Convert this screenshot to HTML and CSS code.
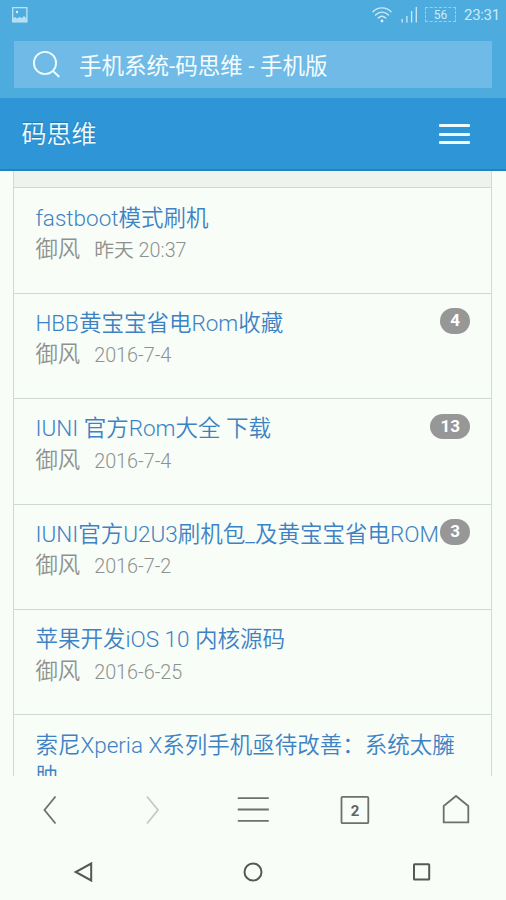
FILE: index.html
```html
<!DOCTYPE html>
<html lang="zh-CN">
<head>
<meta charset="utf-8">
<title>手机系统-码思维</title>
<link rel="stylesheet" href="styles.css">
</head>
<body>
<div class="screen">
  <div class="top">
    <div class="status">
      <svg class="photo" width="16" height="16" viewBox="0 0 16 16"><rect x=".7" y=".7" width="14.2" height="14.2" fill="none" stroke="#c3e9f8" stroke-width="1.2"/><path d="M1 11l2-1 2 1.500 2.500-1.500 2.500 1 2-2 3 2.500V15H1z" fill="#b4dff4"/><circle cx="5" cy="5" r="1.200" fill="#d5f1fb"/></svg>
      <svg class="wifi" width="20" height="16" viewBox="0 0 20 16" fill="none" stroke="#c9ebf8" stroke-width="1.400" stroke-linecap="round"><path d="M1 4.800C6-.4 14-.4 19 4.800M3.500 8C7.400 4.200 12.600 4.200 16.500 8M6.200 11C8.600 8.800 11.400 8.800 13.800 11"/><circle cx="10" cy="14" r="1.400" fill="#d5f1fb" stroke="none"/></svg>
      <svg class="signal" width="17" height="17" viewBox="0 0 17 17" stroke="#c9ebf8" stroke-width="1.300"><path d="M1.200 12v3.500M5.900 9v6.500M10.600 4v11.500M15.300 0v15.500"/></svg>
      <div class="battery">56</div>
      <div class="clock">23:31</div>
    </div>
    <div class="search">
      <svg width="30" height="30" viewBox="0 0 30 30" fill="none" stroke="#effcff" stroke-width="1.900"><circle cx="13" cy="13" r="11.100"/><path d="M20.500 20.500l6.800 6.500"/></svg>
      <span>手机系统-码思维 - 手机版</span>
    </div>
  </div>
  <div class="header">
    <h1>码思维</h1>
    <div class="menu"><i></i><i></i><i></i></div>
  </div>
  <div class="content">
    <div class="list">
      <div class="strip"></div>
      <div class="item"><div class="title">fastboot模式刷机</div><div class="meta"><span>御风</span><time>昨天 20:37</time></div></div>
      <div class="item"><div class="title">HBB黄宝宝省电Rom收藏</div><div class="meta"><span>御风</span><time>2016-7-4</time></div><b class="badge">4</b></div>
      <div class="item"><div class="title">IUNI 官方Rom大全 下载</div><div class="meta"><span>御风</span><time>2016-7-4</time></div><b class="badge">13</b></div>
      <div class="item"><div class="title">IUNI官方U2U3刷机包_及黄宝宝省电ROM</div><div class="meta"><span>御风</span><time>2016-7-2</time></div><b class="badge">3</b></div>
      <div class="item"><div class="title">苹果开发iOS 10 内核源码</div><div class="meta"><span>御风</span><time>2016-6-25</time></div></div>
      <div class="item"><div class="title">索尼Xperia X系列手机亟待改善：系统太臃<br>肿</div></div>
    </div>
  </div>
  <div class="toolbar">
    <svg width="32" height="32" viewBox="0 0 32 32"><path d="M21.500 2.500L10.500 16l11 13.500"/></svg>
    <svg class="off" width="32" height="32" viewBox="0 0 32 32"><path d="M11 2.500L22 16l-11 13.500"/></svg>
    <svg width="32" height="32" viewBox="0 0 32 32"><path d="M.8 4.200h31M.8 15.500h31M.8 26.900h31"/></svg>
    <svg width="32" height="32" viewBox="0 0 32 32"><rect x="2.500" y="2.800" width="26.800" height="26.400" rx="1"/><text x="16" y="21.500">2</text></svg>
    <svg width="32" height="32" viewBox="0 0 32 32"><path d="M3.700 12L16 2l12.300 10v16.400H3.700z"/></svg>
  </div>
  <div class="nav">
    <svg width="24" height="24" viewBox="0 0 24 24"><path d="M19.200 3.500v17L3.700 12z"/></svg>
    <svg width="24" height="24" viewBox="0 0 24 24"><circle cx="12" cy="12" r="8.500"/></svg>
    <svg width="24" height="24" viewBox="0 0 24 24"><rect x="4" y="4.200" width="15.200" height="15.400" rx=".5"/></svg>
  </div>
</div>
</body>
</html>
```
FILE: styles.css
```css
* { box-sizing: border-box; }
body { margin: 0; background: #f8fdf8; font-family: Roboto, "Noto Sans CJK SC", sans-serif; }
.screen { width: 506px; height: 900px; display: flex; flex-direction: column; overflow: hidden; }
.top { height: 98px; flex: none; background: #4eabde; }
.status { height: 41px; display: flex; align-items: flex-start; padding: 7px 6px 0 12px; }
.wifi { margin-left: auto; margin-right: 9px; }
.signal { margin-right: 7px; }
.battery { width: 31px; height: 15px; border: 1px dashed #94d0ee; color: #c9ebf8; font-size: 12px; line-height: 14px; text-align: center; margin-right: 8px; }
.clock { width: 36px; color: #c9ebf8; font-size: 15px; line-height: 17px; white-space: nowrap; letter-spacing: -.3px; }
.search { margin: 0 14px; height: 47px; background: #6fbae6; display: flex; align-items: center; padding-left: 18px; color: #f5fdff; font-size: 22.5px; white-space: nowrap; }
.search span { margin: 0 0 2px 17px; }
.header { height: 73px; flex: none; background: #2e96d7; border-bottom: 2px solid #2583b7; display: flex; align-items: center; justify-content: space-between; padding: 0 36px 0 21.5px; }
h1 { margin: 2px 0 0; font-size: 25px; font-weight: 350; color: #f1fcff; line-height: 36px; text-shadow: 0 -1px 1px #2677ad; }
.menu { width: 31px; display: flex; flex-direction: column; gap: 5.5px; margin-top: 1px; }
.menu i { height: 3px; background: #effcff; border-radius: 1px; }
.content { height: 605px; flex: none; overflow: hidden; padding: 0 14px 0 13px; }
.list { border: solid #d2dad5; border-width: 0 1px; min-height: 605px; }
.strip { height: 16.2px; background: #eff3ee; }
.item { position: relative; height: 105.45px; border-top: 1px solid #cfd8d2; padding: 14.4px 0 0 21.4px; }
.title { font-size: 22.5px; line-height: 31.4px; color: #3d82c4; font-weight: 350; white-space: nowrap; }
.meta { display: flex; align-items: center; height: 31px; color: #8e928e; font-weight: 350; font-size: 22.4px; line-height: 31px; }
.meta time { font-size: 19.8px; margin-left: 14px; padding-top: 2px; }
.badge { position: absolute; right: 21px; top: 14.5px; height: 25.5px; padding: 0 10px; border-radius: 13px; background: #969796; color: #fff; font-size: 17px; font-weight: 700; line-height: 25.5px; }
.toolbar { height: 68px; flex: none; display: flex; justify-content: space-between; align-items: center; padding: 0 34px; }
.toolbar svg { fill: none; stroke: #6d706d; stroke-width: 1.8; }
.toolbar svg.off { stroke: #c6cac6; }
.toolbar text { fill: #626562; stroke: none; font-size: 15px; font-weight: 700; text-anchor: middle; }
.nav { height: 56px; flex: none; display: flex; justify-content: space-between; align-items: center; padding: 0 72px; }
.nav svg { fill: none; stroke: #555955; stroke-width: 2; }
```
